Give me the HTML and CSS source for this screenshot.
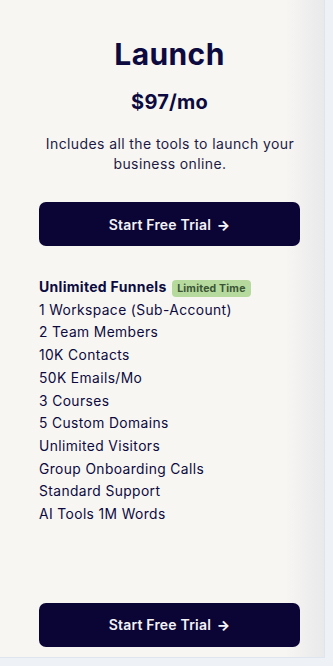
FILE: index.html
```html
<!DOCTYPE html>
<html lang="en">
<head>
  <meta charset="UTF-8" />
  <title>Launch Plan</title>
  <link rel="stylesheet" href="styles.css">
</head>
<body>
  <div class="card">
    <h1 class="plan-name">Launch</h1>
    <div class="price">$97/mo</div>
    <p class="blurb">Includes all the tools to launch your business online.</p>

    <button class="cta">Start Free Trial <span class="arrow">&#8594;</span></button>

    <ul class="features">
      <li class="lead">Unlimited Funnels <span class="badge">Limited Time</span></li>
      <li>1 Workspace (Sub-Account)</li>
      <li>2 Team Members</li>
      <li>10K Contacts</li>
      <li>50K Emails/Mo</li>
      <li>3 Courses</li>
      <li>5 Custom Domains</li>
      <li>Unlimited Visitors</li>
      <li>Group Onboarding Calls</li>
      <li>Standard Support</li>
      <li>AI Tools 1M Words</li>
    </ul>

    <button class="cta bottom">Start Free Trial <span class="arrow">&#8594;</span></button>
  </div>
</body>
</html>
```

FILE: styles.css
```css
body {
  margin: 0;
  background: #eef1f5;
  font-family: 'Inter', 'Open Sans', sans-serif;
  color: #0c0a3e;
}

.card {
  width: 325px;
  height: 658px;
  box-sizing: border-box;
  border-right: 1px solid #dfe5ee;
  border-bottom: 1px solid #dfe5ee;
  background: linear-gradient(to right, #f8f6f3 88%, #e9e9eb);
  padding: 36px 0 0 39px;
  display: flex;
  flex-direction: column;
}

.plan-name {
  margin: 0;
  width: 261px;
  text-align: center;
  font-size: 30px;
  font-weight: 700;
  line-height: 36px;
  letter-spacing: 0.4px;
}

.price {
  width: 261px;
  margin-top: 18px;
  text-align: center;
  font-size: 20px;
  font-weight: 700;
  line-height: 24px;
  letter-spacing: 0.2px;
}

.blurb {
  width: 270px;
  margin: 20px 0 0 -4px;
  text-align: center;
  font-size: 14px;
  line-height: 20px;
  letter-spacing: 0.4px;
  color: #1c1a44;
}

.cta {
  width: 261px;
  height: 44px;
  margin-top: 28px;
  border: none;
  border-radius: 7px;
  background: #0a0535;
  color: #f3f2f7;
  font-family: inherit;
  font-size: 14px;
  font-weight: 600;
  letter-spacing: 0.2px;
  cursor: pointer;
}

.cta .arrow {
  font-weight: 800;
  margin-left: 2px;
}

.cta.bottom {
  margin-top: 77px;
}

.features {
  list-style: none;
  margin: 30px 0 0;
  padding: 0;
  font-size: 13.8px;
  font-weight: 400;
  letter-spacing: 0.4px;
  line-height: 22.7px;
}

.features .lead {
  font-size: 14px;
  font-weight: 700;
  letter-spacing: 0.3px;
}

.badge {
  display: inline-block;
  margin-left: 2px;
  padding: 0 5px;
  line-height: 17px;
  border-radius: 4px;
  background: #b6da9d;
  color: #3a5434;
  font-size: 10.5px;
  font-weight: 700;
  letter-spacing: 0.2px;
}
```
